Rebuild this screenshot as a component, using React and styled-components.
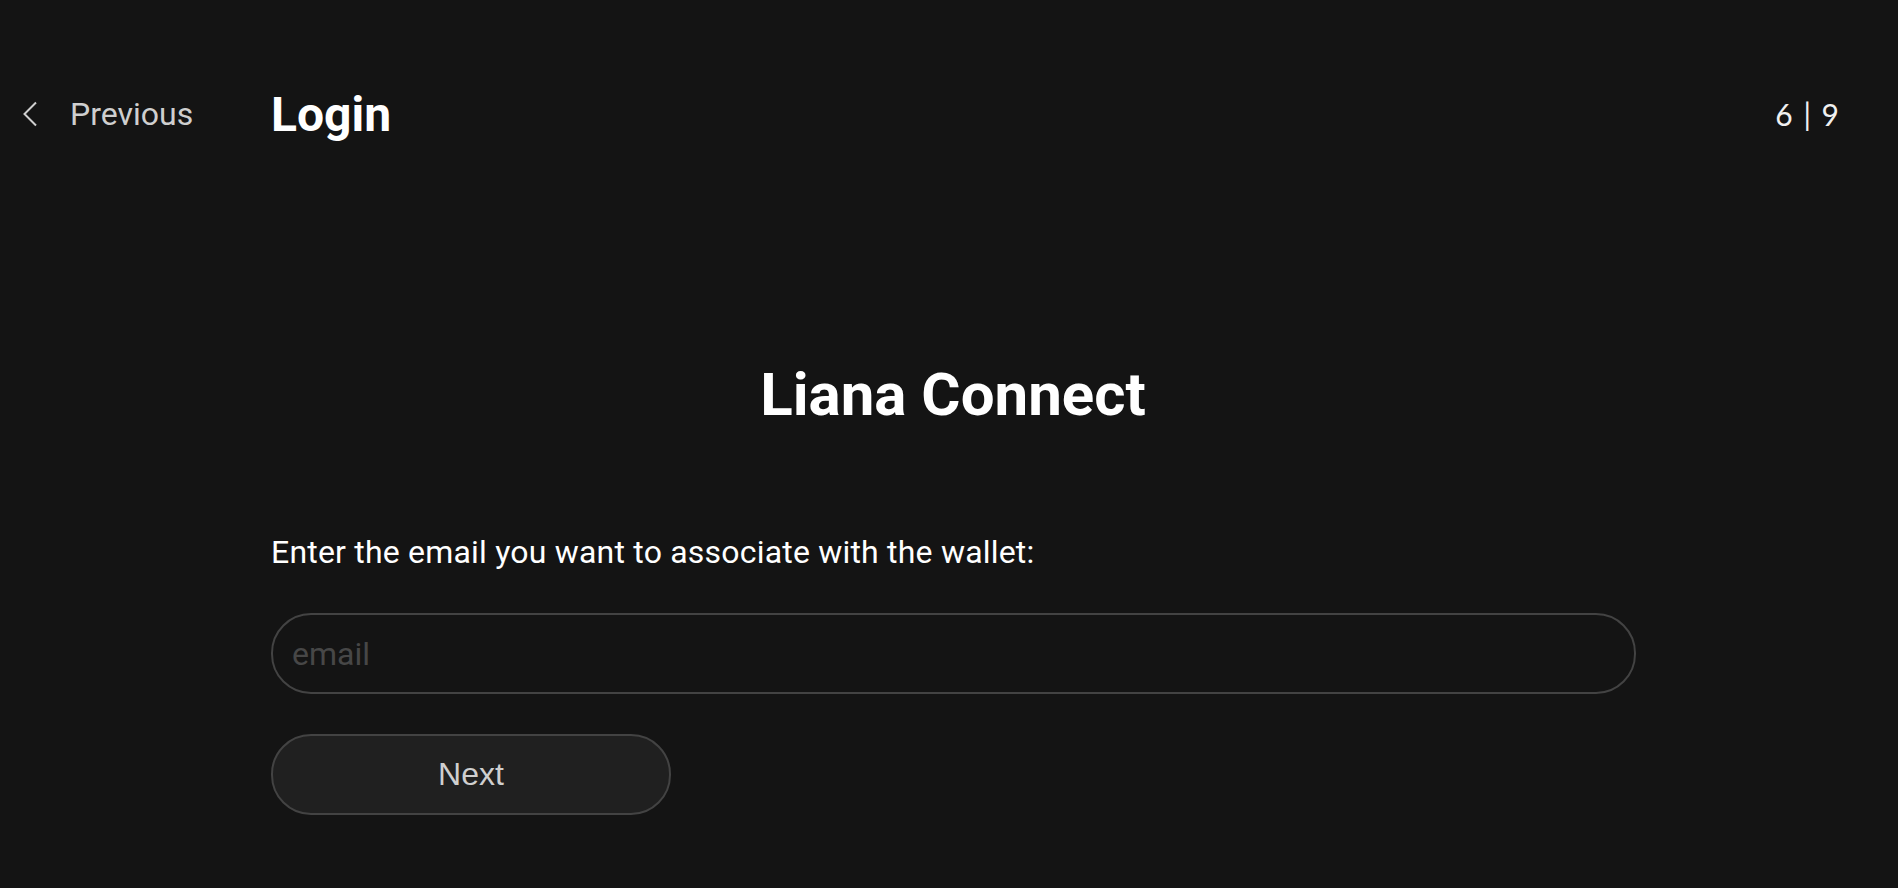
import React from "react";
import styled, { createGlobalStyle } from "styled-components";

const GlobalStyle = createGlobalStyle`
  html, body {
    margin: 0;
    padding: 0;
    background: #141414;
  }
  body {
    font-family: Roboto, "Noto Sans", sans-serif;
    color: #fff;
  }
`;

const App = () => {
  return (
    <Page>
      <GlobalStyle />
      <Header>
        <BackButton>
          <svg width="16" height="26" viewBox="0 0 16 26" fill="none">
            <path d="M14 1.5 L2.5 13 L14 24.5" stroke="#cfcfcf" strokeWidth="2" />
          </svg>
          <span>Previous</span>
        </BackButton>
        <Title>Login</Title>
        <Steps>6 | 9</Steps>
      </Header>
      <Content>
        <Heading>Liana Connect</Heading>
        <Label>Enter the email you want to associate with the wallet:</Label>
        <EmailInput placeholder="email" />
        <NextButton>Next</NextButton>
      </Content>
    </Page>
  );
};

const Page = styled.div`
  width: 1898px;
  height: 888px;
  background: #141414;
  overflow: hidden;
`;

const Header = styled.div`
  display: flex;
  align-items: center;
  height: 228px;
  padding: 0 59px 0 22px;
`;

const BackButton = styled.div`
  display: flex;
  align-items: center;
  gap: 32px;
  width: 249px;
  color: #cfcfcf;
  font-size: 32px;
  cursor: pointer;
`;

const Title = styled.h1`
  margin: 0;
  flex: 1;
  font-size: 48px;
  font-weight: 700;
  color: #fff;
`;

const Steps = styled.div`
  font-family: Lato, sans-serif;
  font-size: 30px;
  word-spacing: 3px;
  color: #f0f0f0;
`;

const Content = styled.div`
  width: 1364px;
  margin-left: 271px;
  display: flex;
  flex-direction: column;
  align-items: flex-start;
`;

const Heading = styled.h2`
  align-self: center;
  margin: 132px 0 0;
  font-size: 60px;
  font-weight: 700;
  line-height: 70px;
  color: #fff;
`;

const Label = styled.p`
  margin: 103px 0 0;
  font-size: 32px;
  line-height: 38px;
  letter-spacing: 0.2px;
  color: #fff;
`;

const EmailInput = styled.input`
  box-sizing: border-box;
  width: 1365px;
  height: 81px;
  margin-top: 42px;
  padding: 0 19px;
  border: 2px solid #434343;
  border-radius: 40px;
  background: #141414;
  font-family: Roboto, sans-serif;
  font-size: 32px;
  color: #fff;
  outline: none;

  &::placeholder {
    color: #474747;
  }
`;

const NextButton = styled.button`
  box-sizing: border-box;
  width: 400px;
  height: 81px;
  margin-top: 40px;
  border: 2px solid #434343;
  border-radius: 40px;
  background: #202020;
  font-family: "Liberation Sans", Arial, sans-serif;
  font-size: 32px;
  color: #cfcfcf;
  cursor: pointer;
`;

export default App;
